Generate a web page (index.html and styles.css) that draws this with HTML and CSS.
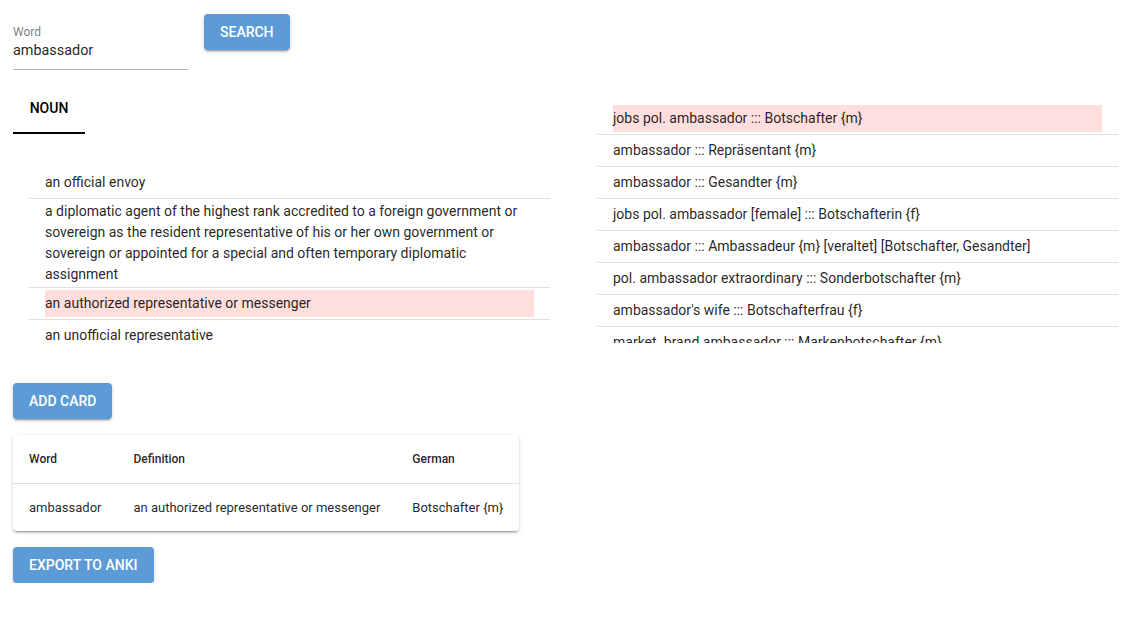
FILE: index.html
```html
<!DOCTYPE html>
<html lang="en">
<head>
<meta charset="utf-8">
<title>Word cards</title>
<link rel="stylesheet" href="styles.css">
</head>
<body>
<div class="page">
  <div class="top">
    <div class="field">
      <label class="field-label" for="word">Word</label>
      <input class="field-input" id="word" type="text" value="ambassador">
    </div>
    <button class="btn">Search</button>
  </div>

  <div class="columns">
    <div class="col-left">
      <div class="tabs">
        <div class="tab active">Noun</div>
      </div>
      <ul class="list list-left">
        <li class="item"><span class="item-text">an official envoy</span></li>
        <li class="item"><span class="item-text">a diplomatic agent of the highest rank accredited to a foreign government or sovereign as the resident representative of his or her own government or sovereign or appointed for a special and often temporary diplomatic assignment</span></li>
        <li class="item"><span class="item-text selected">an authorized representative or messenger</span></li>
        <li class="item"><span class="item-text">an unofficial representative</span></li>
      </ul>
    </div>
    <div class="col-right">
      <div class="scroll">
        <ul class="list list-right">
          <li class="item"><span class="item-text selected">jobs pol. ambassador ::: Botschafter {m}</span></li>
          <li class="item"><span class="item-text">ambassador ::: Repräsentant {m}</span></li>
          <li class="item"><span class="item-text">ambassador ::: Gesandter {m}</span></li>
          <li class="item"><span class="item-text">jobs pol. ambassador [female] ::: Botschafterin {f}</span></li>
          <li class="item"><span class="item-text">ambassador ::: Ambassadeur {m} [veraltet] [Botschafter, Gesandter]</span></li>
          <li class="item"><span class="item-text">pol. ambassador extraordinary ::: Sonderbotschafter {m}</span></li>
          <li class="item"><span class="item-text">ambassador's wife ::: Botschafterfrau {f}</span></li>
          <li class="item"><span class="item-text">market. brand ambassador ::: Markenbotschafter {m}</span></li>
        </ul>
      </div>
    </div>
  </div>

  <button class="btn btn-add">Add card</button>

  <div class="card">
    <table class="table">
      <thead>
        <tr><th>Word</th><th>Definition</th><th>German</th></tr>
      </thead>
      <tbody>
        <tr><td>ambassador</td><td>an authorized representative or messenger</td><td>Botschafter {m}</td></tr>
      </tbody>
    </table>
  </div>

  <button class="btn btn-export">Export to Anki</button>
</div>
</body>
</html>
```

FILE: styles.css
```css
* { box-sizing: border-box; }

html, body {
  margin: 0;
  padding: 0;
  background: #fff;
}

body {
  font-family: Roboto, "Liberation Sans", Arial, sans-serif;
  color: rgba(0, 0, 0, 0.87);
  font-size: 14px;
}

.page {
  padding: 14px 13px 0 13px;
}

.top {
  display: flex;
  align-items: flex-start;
  gap: 16px;
}

.field {
  width: 175px;
  padding-top: 11px;
  padding-bottom: 9px;
  border-bottom: 1px solid rgba(0, 0, 0, 0.3);
  display: flex;
  flex-direction: column;
}

.field-label {
  font-size: 12px;
  line-height: 14px;
  color: rgba(0, 0, 0, 0.54);
}

.field-input {
  margin-top: 2px;
  border: none;
  outline: none;
  padding: 0;
  font-family: inherit;
  font-size: 14.4px;
  line-height: 19px;
  height: 19px;
  color: rgba(0, 0, 0, 0.87);
  background: transparent;
  width: 100%;
}

.btn {
  display: block;
  border: none;
  border-radius: 4px;
  background: #5c9bd6;
  color: #fff;
  font-family: inherit;
  font-size: 14px;
  font-weight: 500;
  letter-spacing: 0;
  text-transform: uppercase;
  height: 36px;
  padding: 0 16px;
  line-height: 36px;
  box-shadow: 0 3px 1px -2px rgba(0, 0, 0, 0.2), 0 2px 2px 0 rgba(0, 0, 0, 0.14), 0 1px 5px 0 rgba(0, 0, 0, 0.12);
  cursor: pointer;
}

.columns {
  margin-top: 16px;
  display: grid;
  grid-template-columns: 560px 1fr;
  align-items: start;
}

.tabs {
  display: flex;
  height: 48px;
}

.tab {
  width: 72px;
  height: 48px;
  display: flex;
  align-items: center;
  justify-content: center;
  font-size: 14px;
  font-weight: 500;
  text-transform: uppercase;
  color: #000;
}

.tab.active {
  border-bottom: 2px solid #000;
  padding-bottom: 2px;
}

.list {
  list-style: none;
  margin: 0;
  padding: 0;
}

.list-left {
  margin-top: 33px;
  margin-left: 16px;
  width: 521px;
}

.col-right {
  padding-top: 17px;
  padding-left: 24px;
}

.scroll {
  width: 521px;
  height: 240px;
  overflow: hidden;
}

.item {
  padding: 2px 16px;
  border-bottom: 1px solid #e0e0e0;
  font-size: 14px;
  line-height: 21px;
}

.list-left .item:last-child {
  border-bottom: none;
}

.item-text {
  display: flex;
  align-items: center;
  min-height: 27px;
}

.item-text.selected {
  background: #ffdede;
}

.btn-add {
  margin-top: 32px;
}

.card {
  margin-top: 16px;
  display: block;
  width: fit-content;
  border-radius: 4px;
  background: #fff;
  box-shadow: 0 3px 1px -2px rgba(0, 0, 0, 0.2), 0 2px 2px 0 rgba(0, 0, 0, 0.14), 0 1px 5px 0 rgba(0, 0, 0, 0.12);
  overflow: hidden;
}

.table {
  border-collapse: collapse;
}

.table th {
  text-align: left;
  font-size: 12px;
  font-weight: 500;
  color: rgba(0, 0, 0, 0.87);
  height: 48px;
  padding: 0 16px;
  border-bottom: 1px solid #e0e0e0;
}

.table td {
  font-size: 13px;
  height: 48px;
  padding: 0 16px;
  white-space: nowrap;
}

.btn-export {
  margin-top: 16px;
}
```
